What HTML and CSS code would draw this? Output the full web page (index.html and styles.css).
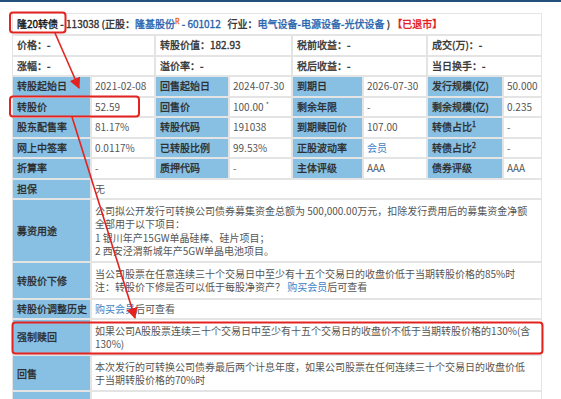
FILE: index.html
```html
<!DOCTYPE html>
<html lang="zh">
<head>
<meta charset="utf-8">
<title>隆20转债</title>
<link rel="stylesheet" href="styles.css">
</head>
<body>
<div class="topbar"></div>
<div class="wrap">
<table class="info">
  <colgroup>
    <col class="c1l"><col class="c1v"><col class="c2l"><col class="c2v"><col class="c3l"><col class="c3v"><col class="c4l"><col class="c4v">
  </colgroup>
  <tr class="head">
    <td colspan="8"><span class="blk">隆20转债</span> - 113038 (正股：<span class="lnk">隆基股份</span><sup class="r">R</sup> <span class="lnk">- 601012</span>&nbsp;&nbsp; 行业：<span class="lnk">电气设备-电源设备-光伏设备</span> ) <span class="red">【已退市】</span></td>
  </tr>
  <tr class="quote">
    <td colspan="2">价格：-</td>
    <td colspan="2">转股价值：182.93</td>
    <td colspan="2">税前收益：-</td>
    <td colspan="2">成交(万)：-</td>
  </tr>
  <tr class="quote">
    <td colspan="2">涨幅：-</td>
    <td colspan="2">溢价率：-</td>
    <td colspan="2">税后收益：-</td>
    <td colspan="2">当日换手：-</td>
  </tr>
  <tr class="grid">
    <td class="lb">转股起始日</td><td>2021-02-08</td>
    <td class="lb">回售起始日</td><td>2024-07-30</td>
    <td class="lb">到期日</td><td>2026-07-30</td>
    <td class="lb">发行规模(亿)</td><td>50.000</td>
  </tr>
  <tr class="grid">
    <td class="lb">转股价</td><td>52.59</td>
    <td class="lb">回售价</td><td>100.00 <sup>*</sup></td>
    <td class="lb">剩余年限</td><td>-</td>
    <td class="lb">剩余规模(亿)</td><td>0.235</td>
  </tr>
  <tr class="grid">
    <td class="lb">股东配售率</td><td>81.17%</td>
    <td class="lb">转股代码</td><td>191038</td>
    <td class="lb">到期赎回价</td><td>107.00</td>
    <td class="lb">转债占比<sup>1</sup></td><td>-</td>
  </tr>
  <tr class="grid">
    <td class="lb">网上中签率</td><td>0.0117%</td>
    <td class="lb">已转股比例</td><td>99.53%</td>
    <td class="lb">正股波动率</td><td><span class="lnk2">会员</span></td>
    <td class="lb">转债占比<sup>2</sup></td><td>-</td>
  </tr>
  <tr class="grid">
    <td class="lb">折算率</td><td>-</td>
    <td class="lb">质押代码</td><td>-</td>
    <td class="lb">主体评级</td><td>AAA</td>
    <td class="lb">债券评级</td><td>AAA</td>
  </tr>
  <tr class="grid">
    <td class="lb">担保</td><td colspan="7">无</td>
  </tr>
  <tr class="text">
    <td class="lb">募资用途</td>
    <td colspan="7">公司拟公开发行可转换公司债券募集资金总额为 500,000.00万元，扣除发行费用后的募集资金净额<br>全部用于以下项目：<br>1 银川年产15GW单晶硅棒、硅片项目；<br>2 西安泾渭新城年产5GW单晶电池项目。</td>
  </tr>
  <tr class="text">
    <td class="lb">转股价下修</td>
    <td colspan="7">当公司股票在任意连续三十个交易日中至少有十五个交易日的收盘价低于当期转股价格的85%时<br>注：转股价下修是否可以低于每股净资产？ <span class="lnk2">购买会员</span>后可查看</td>
  </tr>
  <tr class="grid">
    <td class="lb">转股价调整历史</td>
    <td colspan="7"><span class="lnk2">购买会员</span>后可查看</td>
  </tr>
  <tr class="text">
    <td class="lb">强制赎回</td>
    <td colspan="7">如果公司A股股票连续三十个交易日中至少有十五个交易日的收盘价不低于当期转股价格的130%(含<br>130%)</td>
  </tr>
  <tr class="text">
    <td class="lb">回售</td>
    <td colspan="7">本次发行的可转换公司债券最后两个计息年度，如果公司股票在任何连续三十个交易日的收盘价低<br>于当期转股价格的70%时</td>
  </tr>
  <tr class="grid">
    <td class="lb">&nbsp;</td>
    <td colspan="7">&nbsp;</td>
  </tr>
</table>
</div>
<svg class="marks" width="561" height="399" viewBox="0 0 561 399" xmlns="http://www.w3.org/2000/svg">
  <defs>
    <marker id="ah" viewBox="0 0 10 10" refX="9" refY="5" markerWidth="7" markerHeight="7" orient="auto-start-reverse">
      <path d="M0,0 L10,5 L0,10 z" fill="#e3231f"/>
    </marker>
  </defs>
  <rect x="10" y="12.5" width="55.5" height="20" rx="3" fill="none" stroke="#e3231f" stroke-width="2"/>
  <rect x="10" y="96.5" width="129" height="20" rx="3" fill="none" stroke="#e3231f" stroke-width="2"/>
  <rect x="12.5" y="322.5" width="530" height="31" rx="3" fill="none" stroke="#e3231f" stroke-width="2"/>
  <line x1="55" y1="33" x2="79" y2="88" stroke="#e3231f" stroke-width="1.6" marker-end="url(#ah)"/>
  <line x1="72" y1="117" x2="135" y2="318" stroke="#e3231f" stroke-width="1.6" marker-end="url(#ah)"/>
</svg>
</body>
</html>
```

FILE: styles.css
```css
html, body {
  margin: 0;
  padding: 0;
  background: #fff;
}
body {
  font-family: "Noto Sans CJK SC", "Noto Sans", sans-serif;
  font-size: 10px;
  color: #555;
  width: 561px;
  height: 399px;
  overflow: hidden;
  position: relative;
}
.topbar {
  height: 2px;
  background: #22507b;
}
.wrap {
  padding: 11px 0 0 12px;
}
.info {
  width: 530px;
  table-layout: fixed;
  border-collapse: separate;
  border-spacing: 0;
}
.c1l { width: 79px; }
.c1v { width: 64px; }
.c2l { width: 74px; }
.c2v { width: 63px; }
.c3l { width: 71px; }
.c3v { width: 64px; }
.c4l { width: 76px; }
.c4v { width: 39px; }
.info td {
  border: 1px solid #e4e4e4;
  padding: 0 3px;
  white-space: nowrap;
  overflow: hidden;
  vertical-align: middle;
}
.head td {
  height: 20px;
  line-height: 20px;
  color: #333;
  padding-left: 4px;
  -webkit-text-stroke: 0.35px currentColor;
}
.blk { color: #111; }
.lnk { color: #2864ad; }
.red { color: #e4141b; }
sup {
  font-size: 7px;
  line-height: 0;
  vertical-align: 4px;
}
.r { color: #f06a1c; }
.quote td {
  height: 18.5px;
  line-height: 18.5px;
  color: #333;
  padding-left: 4px;
  -webkit-text-stroke: 0.35px currentColor;
}
.grid td {
  height: 18.5px;
  line-height: 18.5px;
}
.text td {
  line-height: 13.6px;
  padding-top: 3px;
  padding-bottom: 3px;
}
.text td[colspan] {
  padding-top: 3.5px;
  padding-bottom: 3.5px;
}
.info td.lb {
  background: #88c0e3;
  color: #2a2a2a;
  padding-left: 4px;
  -webkit-text-stroke: 0.3px currentColor;
}
.lnk2 { color: #3d7fc4; }
.marks {
  position: absolute;
  left: 0;
  top: 0;
  pointer-events: none;
}
```
